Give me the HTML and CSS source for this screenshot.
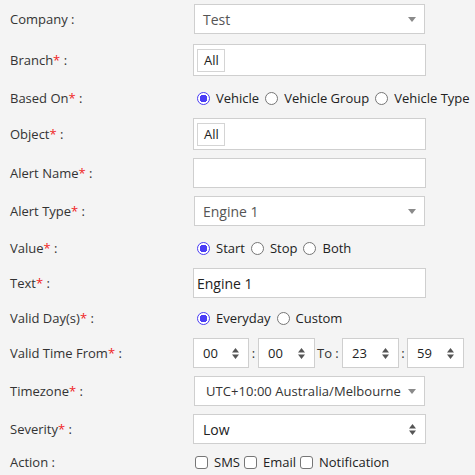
FILE: index.html
```html
<!DOCTYPE html>
<html>
<head>
<meta charset="utf-8">
<link rel="stylesheet" href="styles.css">
</head>
<body>
<div class="form">
  <div class="row h30">
    <div class="label">Company :</div>
    <div class="ctrl"><div class="sel">Test<svg class="caret" width="8" height="5" viewBox="0 0 8 5"><path d="M0 0H8L4 5Z"/></svg></div></div>
  </div>
  <div class="row h32 mt2">
    <div class="label">Branch<span class="req">*</span> :</div>
    <div class="ctrl"><div class="box tagbox"><span class="tag">All</span></div></div>
  </div>
  <div class="row h24 mt2">
    <div class="label">Based On<span class="req">*</span> :</div>
    <div class="ctrl opts">
      <span class="opt"><span class="radio on"></span>Vehicle</span>
      <span class="opt"><span class="radio"></span>Vehicle Group</span>
      <span class="opt"><span class="radio"></span>Vehicle Type</span>
    </div>
  </div>
  <div class="row h32">
    <div class="label">Object<span class="req">*</span> :</div>
    <div class="ctrl"><div class="box tagbox"><span class="tag">All</span></div></div>
  </div>
  <div class="row h30">
    <div class="label">Alert Name<span class="req">*</span> :</div>
    <div class="ctrl"><div class="box"></div></div>
  </div>
  <div class="row h30">
    <div class="label">Alert Type<span class="req">*</span> :</div>
    <div class="ctrl"><div class="sel">Engine 1<svg class="caret" width="8" height="5" viewBox="0 0 8 5"><path d="M0 0H8L4 5Z"/></svg></div></div>
  </div>
  <div class="row h24 mt2">
    <div class="label">Value<span class="req">*</span> :</div>
    <div class="ctrl opts">
      <span class="opt"><span class="radio on"></span>Start</span>
      <span class="opt"><span class="radio"></span>Stop</span>
      <span class="opt"><span class="radio"></span>Both</span>
    </div>
  </div>
  <div class="row h30">
    <div class="label">Text<span class="req">*</span> :</div>
    <div class="ctrl"><div class="box text">Engine 1</div></div>
  </div>
  <div class="row h24">
    <div class="label">Valid Day(s)<span class="req">*</span> :</div>
    <div class="ctrl opts">
      <span class="opt"><span class="radio on"></span>Everyday</span>
      <span class="opt"><span class="radio"></span>Custom</span>
    </div>
  </div>
  <div class="row h30">
    <div class="label">Valid Time From<span class="req">*</span> :</div>
    <div class="ctrl times">
      <div class="num first">00<svg class="spin" width="7" height="11" viewBox="0 0 7 11"><path d="M0 4.5H7L3.5 0Z M0 6.5H7L3.5 11Z"/></svg></div>
      <span class="colon">:</span>
      <div class="num">00<svg class="spin" width="7" height="11" viewBox="0 0 7 11"><path d="M0 4.5H7L3.5 0Z M0 6.5H7L3.5 11Z"/></svg></div>
      <span class="to">To :</span>
      <div class="num">23<svg class="spin" width="7" height="11" viewBox="0 0 7 11"><path d="M0 4.5H7L3.5 0Z M0 6.5H7L3.5 11Z"/></svg></div>
      <span class="colon c2">:</span>
      <div class="num">59<svg class="spin" width="7" height="11" viewBox="0 0 7 11"><path d="M0 4.5H7L3.5 0Z M0 6.5H7L3.5 11Z"/></svg></div>
    </div>
  </div>
  <div class="row h30">
    <div class="label">Timezone<span class="req">*</span> :</div>
    <div class="ctrl"><div class="sel tz">UTC+10:00 Australia/Melbourne<svg class="caret" width="8" height="5" viewBox="0 0 8 5"><path d="M0 0H8L4 5Z"/></svg></div></div>
  </div>
  <div class="row h30">
    <div class="label">Severity<span class="req">*</span> :</div>
    <div class="ctrl"><div class="box sev">Low<svg class="spin dark" width="7" height="11" viewBox="0 0 7 11"><path d="M0 4.5H7L3.5 0Z M0 6.5H7L3.5 11Z"/></svg></div></div>
  </div>
  <div class="row h20">
    <div class="label">Action :</div>
    <div class="ctrl opts">
      <span class="opt"><span class="check"></span>SMS</span>
      <span class="opt"><span class="check"></span>Email</span>
      <span class="opt"><span class="check"></span>Notification</span>
    </div>
  </div>
</div>
</body>
</html>
```

FILE: styles.css
```css
html, body {
  margin: 0;
  padding: 0;
  background: #f4f4f4;
}
body {
  font-family: "Open Sans", "Liberation Sans", sans-serif;
  font-size: 13px;
  color: #333;
}
.form {
  display: flex;
  flex-direction: column;
  gap: 8px;
  padding-top: 4px;
}
.row {
  display: flex;
  align-items: center;
}
.h20 { height: 20px; }
.h24 { height: 24px; }
.h30 { height: 30px; }
.h32 { height: 32px; }
.mt2 { margin-top: 2px; }
.label {
  flex: none;
  width: 183px;
  padding-left: 10px;
  color: #333;
  white-space: nowrap;
}
.req { color: #f01f1f; }
.ctrl {
  flex: none;
  height: 100%;
  display: flex;
  align-items: center;
  white-space: nowrap;
}
.sel {
  box-sizing: border-box;
  margin-left: 1px;
  width: 231px;
  height: 100%;
  background: #fff;
  border: 1px solid #cfcfcf;
  display: flex;
  align-items: center;
  padding-left: 8px;
  color: #555;
  font-size: 14px;
  position: relative;
}
.sel.tz {
  font-size: 13px;
  letter-spacing: 0.05px;
  color: #333;
  padding-left: 11px;
  overflow: hidden;
}
.caret {
  position: absolute;
  right: 8px;
  top: 50%;
  margin-top: -2px;
  fill: #8a8a8a;
}
.tz .caret {
  background: #fff;
  box-shadow: 0 0 0 4px #fff;
}
.box {
  box-sizing: border-box;
  width: 233px;
  height: 100%;
  background: #fff;
  border: 1px solid #cfcfcf;
  display: flex;
  align-items: center;
}
.tagbox {
  padding-left: 3px;
}
.tag {
  box-sizing: border-box;
  height: 23px;
  width: 28px;
  border: 1px solid #d4d4d4;
  display: flex;
  align-items: center;
  padding-left: 6px;
  color: #222;
}
.text {
  padding-left: 3px;
  color: #222;
  font-size: 14px;
}
.sev {
  padding-left: 9px;
  color: #222;
  font-size: 14px;
  position: relative;
}
.sev .spin {
  position: absolute;
  right: 9px;
  top: 50%;
  margin-top: -5px;
}
.opts {
  padding-left: 3px;
}
.opt {
  display: inline-flex;
  align-items: center;
  color: #222;
  margin-right: 5px;
  white-space: nowrap;
}
.radio {
  flex: none;
  box-sizing: border-box;
  width: 13px;
  height: 13px;
  border-radius: 50%;
  border: 1px solid #767676;
  background: #fff;
  margin: 0 6px 0 1px;
}
.radio.on {
  border: 1px solid #4a3df5;
  background: radial-gradient(circle, #4a3df5 0 3.6px, #fff 4px 100%);
}
.check {
  flex: none;
  box-sizing: border-box;
  width: 13px;
  height: 13px;
  border-radius: 3px;
  border: 1px solid #767676;
  background: #fff;
  margin: 0 6px 0 -1px;
}
.times {
  display: flex;
  align-items: stretch;
}
.num {
  box-sizing: border-box;
  width: 57px;
  background: #fff;
  border: 1px solid #cfcfcf;
  display: flex;
  align-items: center;
  justify-content: space-between;
  padding: 0 9px 0 9px;
  color: #222;
}
.num.first { width: 56px; }
.spin {
  fill: #555;
}
.colon {
  box-sizing: border-box;
  width: 9px;
  display: flex;
  align-items: center;
  justify-content: center;
}
.colon.c2 { width: 8px; }
.to {
  box-sizing: border-box;
  display: flex;
  align-items: center;
  width: 27px;
  padding-left: 2px;
}
```
